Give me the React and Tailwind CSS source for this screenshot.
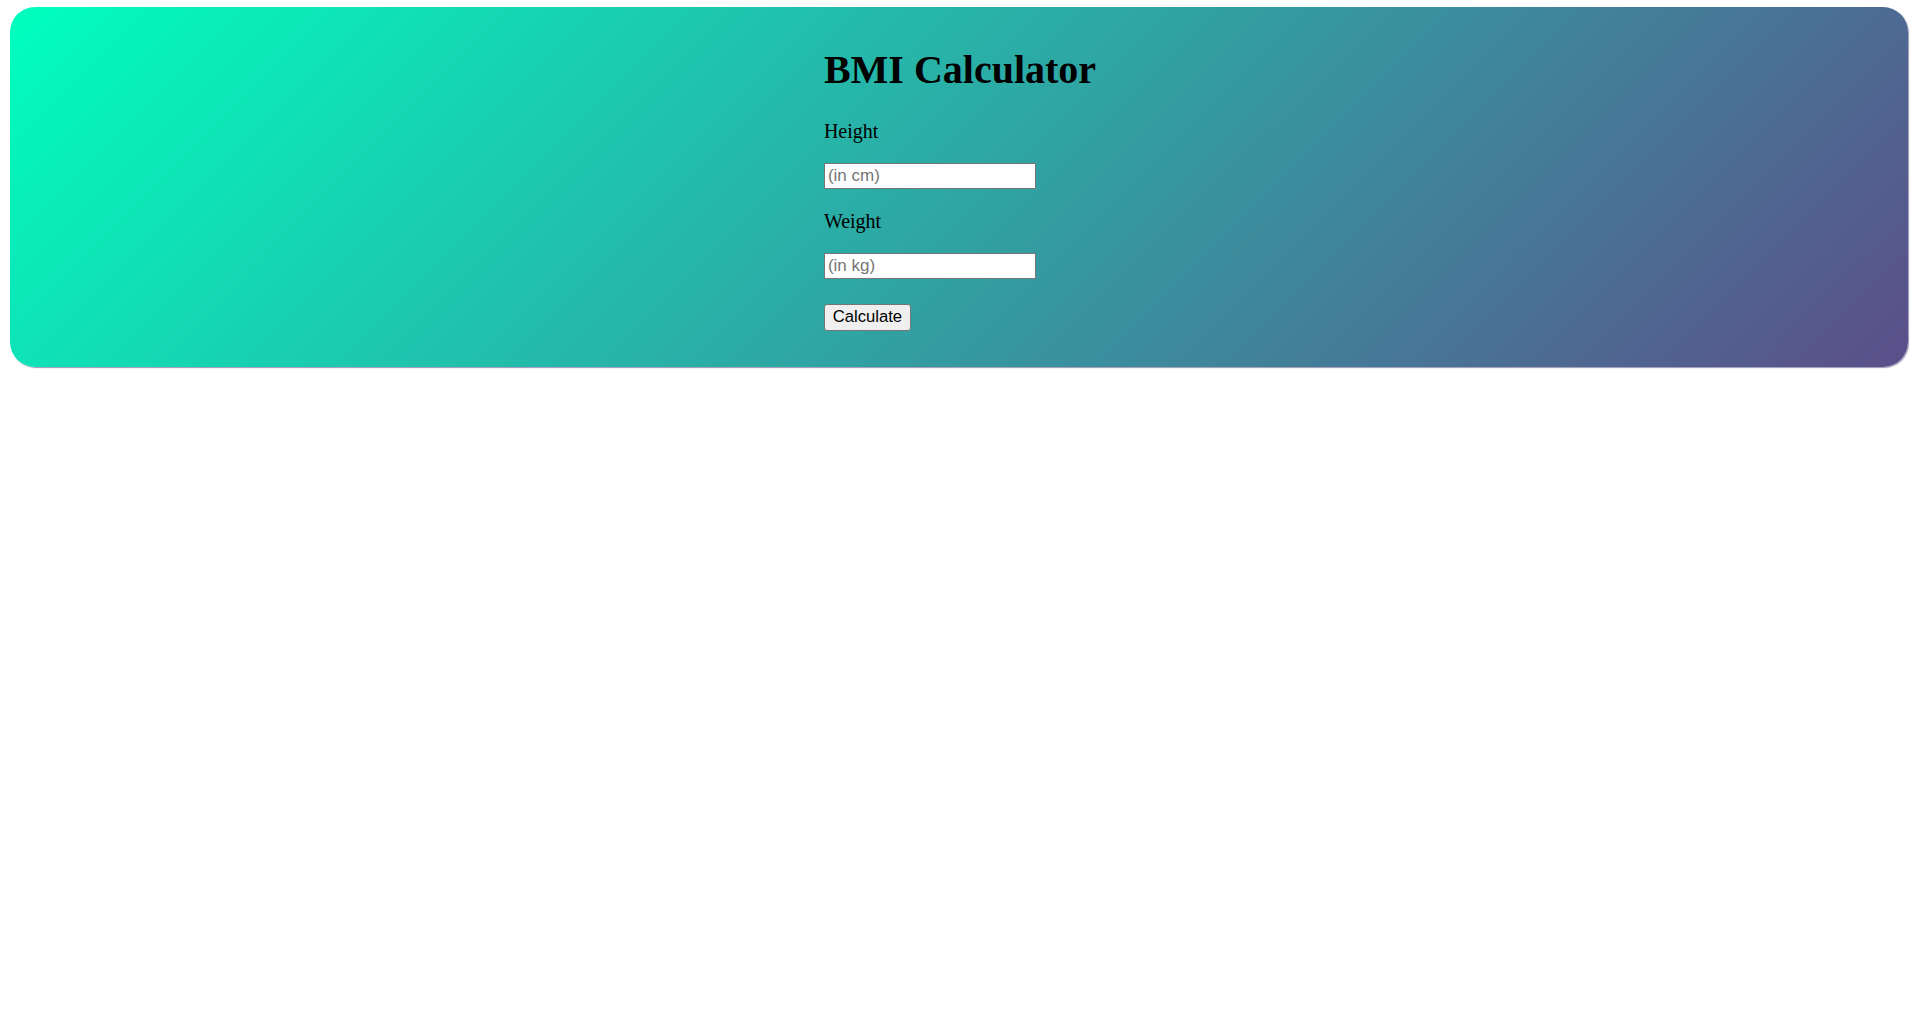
export default function App() {
  return (
    <div className="min-h-screen bg-white pt-[7px] px-[10px]">
      <div className="h-[360px] rounded-[25px] bg-[linear-gradient(135deg,#00ffbf_0%,#5c4e8a_100%)] shadow-[1px_1px_1px_rgba(50,50,110,0.5)]">
        <div className="mx-auto w-fit pl-[2px] pt-[40px] flex flex-col items-start text-black font-['Liberation_Serif',serif]">
          <h1 className="text-[40px] leading-[46px] font-bold whitespace-nowrap">BMI Calculator</h1>
          <label className="mt-[27px] text-[20px] leading-[23px]">Height</label>
          <input
            type="text"
            placeholder="(in cm)"
            className="mt-[20px] w-[212px] h-[26px] bg-white border border-[#767676] px-[3px] text-[17px] font-['Liberation_Sans',Arial,sans-serif] text-black placeholder:text-[#757575] outline-none"
          />
          <label className="mt-[21px] text-[20px] leading-[23px]">Weight</label>
          <input
            type="text"
            placeholder="(in kg)"
            className="mt-[20px] w-[212px] h-[26px] bg-white border border-[#767676] px-[3px] text-[17px] font-['Liberation_Sans',Arial,sans-serif] text-black placeholder:text-[#757575] outline-none"
          />
          <button className="mt-[25px] h-[27px] w-[87px] flex items-center justify-center bg-[#efefef] border border-[#767676] rounded-[3px] text-[16.67px] leading-none text-black font-['Liberation_Sans',Arial,sans-serif]">
            Calculate
          </button>
        </div>
      </div>
    </div>
  );
}
